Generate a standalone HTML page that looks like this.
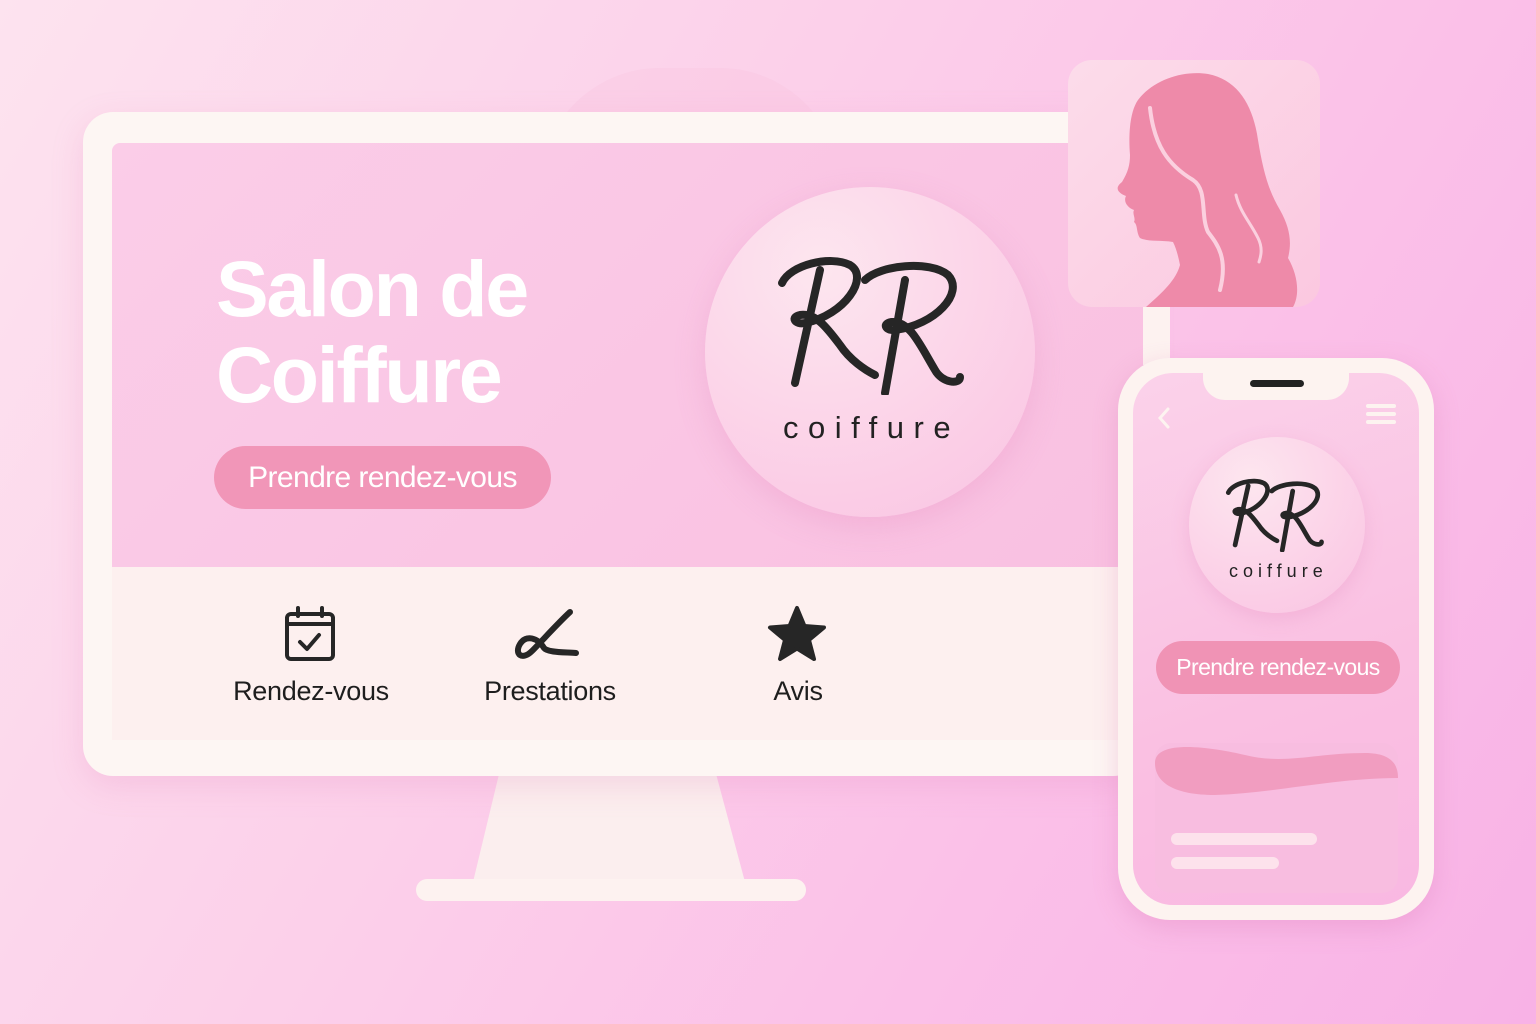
<!DOCTYPE html>
<html><head><meta charset="utf-8"><style>
*{margin:0;padding:0;box-sizing:border-box}
body{width:1536px;height:1024px;overflow:hidden;position:relative;font-family:"Liberation Sans",sans-serif;
background:linear-gradient(120deg,#fde3ef 0%,#fcd0ea 40%,#fbc0e8 70%,#f8b2e6 100%)}
.a{position:absolute}
.title{left:216px;top:246px;color:#fff;font-weight:bold;font-size:79px;line-height:86px;letter-spacing:-2.3px}
.btn{background:#f196b8;color:#fff;border-radius:40px;text-align:center;letter-spacing:-0.6px}
.lbl{font-size:27px;color:#1e1e1e;text-align:center;width:200px;letter-spacing:-0.3px}
</style></head><body>
<div class="a" style="left:540px;top:68px;width:300px;height:120px;border-radius:150px 150px 0 0;background:rgba(248,190,220,0.25)"></div>

<svg class="a" style="left:0;top:0" width="1536" height="1024">
<path d="M500 770 L715 770 L745 882 L473 882 Z" fill="#fbeeee"/>
<rect x="416" y="879" width="390" height="22" rx="11" fill="#fdf2f0"/>
</svg>
<div class="a" style="left:83px;top:112px;width:1060px;height:664px;border-radius:30px;background:#fdf6f3;box-shadow:0 10px 30px rgba(230,140,190,0.25)"></div>
<div class="a" style="left:112px;top:143px;width:1031px;height:424px;border-radius:8px 0 0 0;background:linear-gradient(135deg,#fbcde8,#f9c0e1)"></div>
<div class="a" style="left:112px;top:567px;width:1031px;height:173px;background:#fdf0ef"></div>

<div class="a title">Salon de<br>Coiffure</div>
<div class="a btn" style="left:214px;top:446px;width:337px;height:63px;line-height:63px;font-size:30px">Prendre rendez-vous</div>

<div class="a" style="left:705px;top:187px;width:330px;height:330px;border-radius:50%;background:radial-gradient(circle at 35% 25%,#fde6ef,#fbcde6 70%,#f9c4e2);box-shadow:0 10px 30px rgba(230,140,190,0.3)"></div>
<svg class="a" style="left:770px;top:245px" width="210" height="150" viewBox="0 0 210 150">
<g fill="none" stroke="#262626" stroke-width="8" stroke-linecap="round" stroke-linejoin="round">
<path d="M12 38 C20 20 60 10 80 20 C100 32 75 70 35 78 C25 80 20 72 30 70 C45 68 55 80 70 100 C80 115 95 125 105 130"/>
<path d="M50 25 L25 138"/>
<path d="M95 35 C110 20 160 15 178 30 C195 48 165 80 125 85 C115 86 112 78 122 77 C140 76 150 100 165 125 C172 138 190 140 190 132"/>
<path d="M135 35 L115 148"/>
</g></svg>
<div class="a" style="left:783px;top:410px;font-size:31px;letter-spacing:9.5px;color:#222">coiffure</div>

<svg class="a" style="left:284px;top:606px" width="54" height="56" viewBox="0 0 54 56">
<g fill="none" stroke="#262626" stroke-width="4" stroke-linecap="round" stroke-linejoin="round">
<rect x="3" y="8" width="46" height="45" rx="4"/><path d="M3 18 H49"/><path d="M14 2 V10 M38 2 V10"/><path d="M16 36 L23 43 L35 29"/></g></svg>
<svg class="a" style="left:512px;top:606px" width="70" height="56" viewBox="0 0 70 56">
<path d="M58 6 C45 18 30 35 20 45 C10 55 2 48 8 38 C14 28 26 32 32 42 C36 47 55 46 64 47" fill="none" stroke="#262626" stroke-width="6" stroke-linecap="round"/></svg>
<svg class="a" style="left:767px;top:605px" width="60" height="58" viewBox="0 0 60 58">
<path d="M30 3 L37.5 21 L57 22.5 L42 35 L47 54 L30 43.5 L13 54 L18 35 L3 22.5 L22.5 21 Z" fill="#262626" stroke="#262626" stroke-width="4" stroke-linejoin="round"/></svg>
<div class="a lbl" style="left:211px;top:676px">Rendez-vous</div>
<div class="a lbl" style="left:450px;top:676px">Prestations</div>
<div class="a lbl" style="left:698px;top:676px">Avis</div>

<div class="a" style="left:1143px;top:300px;width:27px;height:65px;background:#fdf2f0"></div>
<div class="a" style="left:1068px;top:60px;width:252px;height:247px;border-radius:24px;background:linear-gradient(135deg,#fcdcea,#fbc8e0);overflow:hidden">
<svg width="252" height="247" viewBox="0 0 252 247">
<path d="M78 247 C95 232 108 220 112 205 C110 195 108 188 105 182 C92 180 80 182 72 178 C68 172 70 165 66 162 C68 158 64 154 66 150 C60 148 55 142 58 136 C50 133 46 128 54 122 C60 112 62 105 62 95 C60 70 63 50 70 40 C85 20 115 10 140 14 C170 20 185 45 190 80 C195 110 200 130 212 150 C222 168 224 182 220 198 C230 215 232 235 225 247 Z" fill="#ee8aa9"/>
<path d="M82 48 C86 85 100 105 125 120 C140 130 132 155 140 172 C150 185 160 198 152 230" fill="none" stroke="#fbd0df" stroke-width="4" stroke-linecap="round"/>
<path d="M168 135 C172 152 182 162 190 178 C195 188 193 196 191 202" fill="none" stroke="#fbd0df" stroke-width="3" stroke-linecap="round"/>
</svg></div>

<div class="a" style="left:1118px;top:358px;width:316px;height:562px;border-radius:52px;background:#fdf3f0;box-shadow:0 8px 25px rgba(220,120,180,0.3)"></div>
<div class="a" style="left:1133px;top:373px;width:286px;height:532px;border-radius:40px;background:linear-gradient(160deg,#fbd2ea,#fac0e2 60%,#f9b8e2)"></div>
<div class="a" style="left:1203px;top:370px;width:146px;height:30px;border-radius:0 0 22px 22px;background:#fdf3f0"></div>
<div class="a" style="left:1250px;top:380px;width:54px;height:7px;border-radius:4px;background:#222"></div>
<svg class="a" style="left:1150px;top:402px" width="260" height="30">
<path d="M18 7 L10 16 L18 25" fill="none" stroke="#fdf3f0" stroke-width="3" stroke-linecap="round"/>
<g stroke="#fdf3f0" stroke-width="4" stroke-linecap="round"><path d="M218 4 H244 M218 12 H244 M218 20 H244"/></g></svg>
<div class="a" style="left:1189px;top:437px;width:176px;height:176px;border-radius:50%;background:radial-gradient(circle at 35% 25%,#fde6ef,#fbcde6 70%,#f9c4e2);box-shadow:0 6px 18px rgba(230,140,190,0.3)"></div>
<svg class="a" style="left:1222px;top:472px" width="110" height="80" viewBox="0 0 210 150">
<g fill="none" stroke="#262626" stroke-width="9" stroke-linecap="round" stroke-linejoin="round">
<path d="M12 38 C20 20 60 10 80 20 C100 32 75 70 35 78 C25 80 20 72 30 70 C45 68 55 80 70 100 C80 115 95 125 105 130"/>
<path d="M50 25 L25 138"/>
<path d="M95 35 C110 20 160 15 178 30 C195 48 165 80 125 85 C115 86 112 78 122 77 C140 76 150 100 165 125 C172 138 190 140 190 132"/>
<path d="M135 35 L115 148"/>
</g></svg>
<div class="a" style="left:1229px;top:561px;font-size:18px;letter-spacing:5px;color:#222">coiffure</div>
<div class="a btn" style="left:1156px;top:641px;width:244px;height:53px;line-height:53px;font-size:23px;background:#f093b5">Prendre rendez-vous</div>
<div class="a" style="left:1155px;top:743px;width:243px;height:150px;border-radius:16px;background:#f8bde0;overflow:hidden">
<svg width="243" height="150"><path d="M0 20 C0 -5 60 5 90 12 C130 22 160 10 210 10 C240 10 243 25 243 35 C180 35 120 50 60 52 C20 52 0 40 0 20 Z" fill="#f19dc0"/>
<rect x="16" y="90" width="146" height="12" rx="6" fill="#fde2ec"/><rect x="16" y="114" width="108" height="12" rx="6" fill="#fde2ec"/></svg></div>
</body></html>
